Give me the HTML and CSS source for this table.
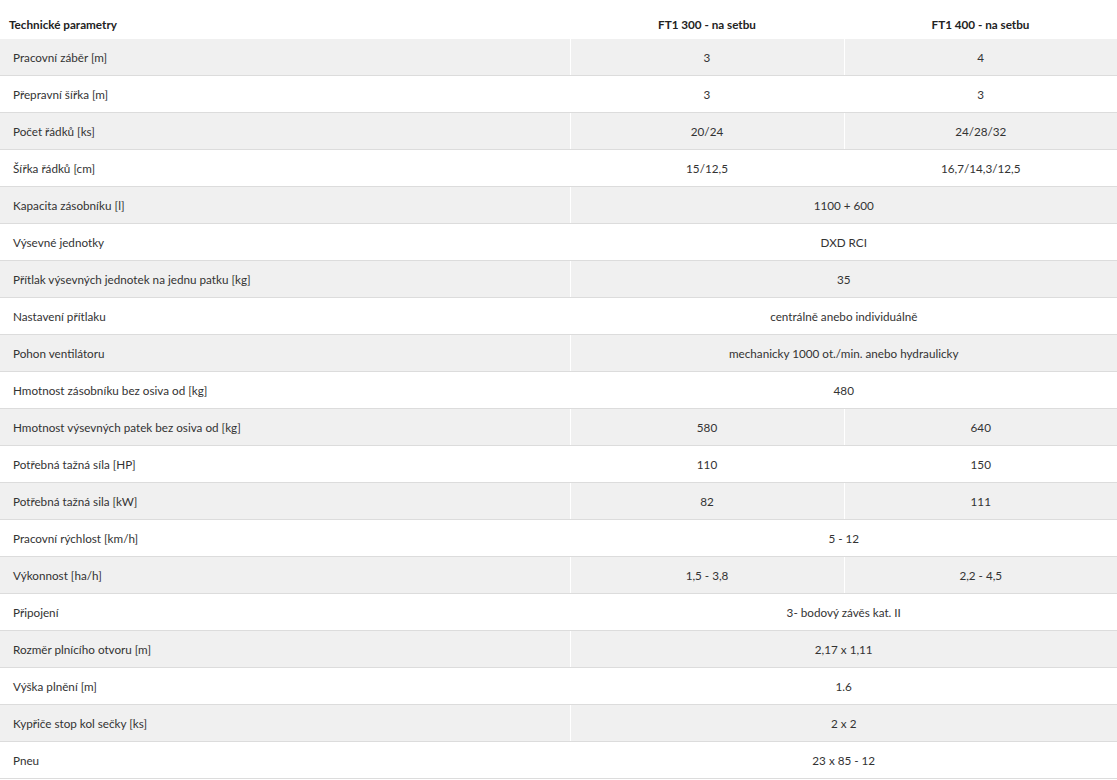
FILE: index.html
```html
<!DOCTYPE html>
<html lang="cs">
<head>
<meta charset="utf-8">
<link rel="stylesheet" href="styles.css">
</head>
<body>
<table class="spec">
  <colgroup>
    <col class="c-name">
    <col class="c-a">
    <col class="c-b">
  </colgroup>
  <thead>
    <tr>
      <th class="name">Technické parametry</th>
      <th>FT1 300 - na setbu</th>
      <th>FT1 400 - na setbu</th>
    </tr>
  </thead>
  <tbody>
    <tr><td class="name">Pracovní záběr [m]</td><td>3</td><td>4</td></tr>
    <tr><td class="name">Přepravní šířka [m]</td><td>3</td><td>3</td></tr>
    <tr><td class="name">Počet řádků [ks]</td><td>20/24</td><td>24/28/32</td></tr>
    <tr><td class="name">Šířka řádků [cm]</td><td>15/12,5</td><td>16,7/14,3/12,5</td></tr>
    <tr><td class="name">Kapacita zásobníku [l]</td><td colspan="2">1100 + 600</td></tr>
    <tr><td class="name">Výsevné jednotky</td><td colspan="2">DXD RCI</td></tr>
    <tr><td class="name">Přítlak výsevných jednotek na jednu patku [kg]</td><td colspan="2">35</td></tr>
    <tr><td class="name">Nastavení přítlaku</td><td colspan="2">centrálně anebo individuálně</td></tr>
    <tr><td class="name">Pohon ventilátoru</td><td colspan="2">mechanicky 1000 ot./min. anebo hydraulicky</td></tr>
    <tr><td class="name">Hmotnost zásobníku bez osiva od [kg]</td><td colspan="2">480</td></tr>
    <tr><td class="name">Hmotnost výsevných patek bez osiva od [kg]</td><td>580</td><td>640</td></tr>
    <tr><td class="name">Potřebná tažná síla [HP]</td><td>110</td><td>150</td></tr>
    <tr><td class="name">Potřebná tažná sila [kW]</td><td>82</td><td>111</td></tr>
    <tr><td class="name">Pracovní rýchlost [km/h]</td><td colspan="2">5 - 12</td></tr>
    <tr><td class="name">Výkonnost [ha/h]</td><td>1,5 - 3,8</td><td>2,2 - 4,5</td></tr>
    <tr><td class="name">Připojení</td><td colspan="2">3- bodový závěs kat. II</td></tr>
    <tr><td class="name">Rozměr plnícího otvoru [m]</td><td colspan="2">2,17 x 1,11</td></tr>
    <tr><td class="name">Výška plnění [m]</td><td colspan="2">1.6</td></tr>
    <tr><td class="name">Kypřiče stop kol sečky [ks]</td><td colspan="2">2 x 2</td></tr>
    <tr><td class="name">Pneu</td><td colspan="2">23 x 85 - 12</td></tr>
  </tbody>
</table>
</body>
</html>
```
FILE: styles.css
```css
html, body {
  margin: 0;
  padding: 0;
  background: #ffffff;
}
body {
  font-family: "Lato", "Open Sans", sans-serif;
  font-size: 11.7px;
  color: #333333;
}
.spec {
  width: 1117px;
  border-collapse: collapse;
  table-layout: fixed;
}
.c-name { width: 570px; }
.c-a { width: 274px; }
.c-b { width: 273px; }
.spec th {
  height: 39px;
  padding: 0 0 8px 0;
  box-sizing: border-box;
  font-weight: bold;
  text-align: center;
  vertical-align: bottom;
  color: #222222;
}
.spec th.name {
  text-align: left;
  padding-left: 9px;
}
.spec td {
  height: 36px;
  padding: 0;
  text-align: center;
  vertical-align: middle;
  border-bottom: 1px solid #dcdcdc;
  border-left: 1px solid #ffffff;
}
.spec td.name {
  text-align: left;
  padding-left: 13px;
  border-left: none;
}
.spec tbody tr:nth-child(odd) td {
  background: #f0f0f0;
}
```
